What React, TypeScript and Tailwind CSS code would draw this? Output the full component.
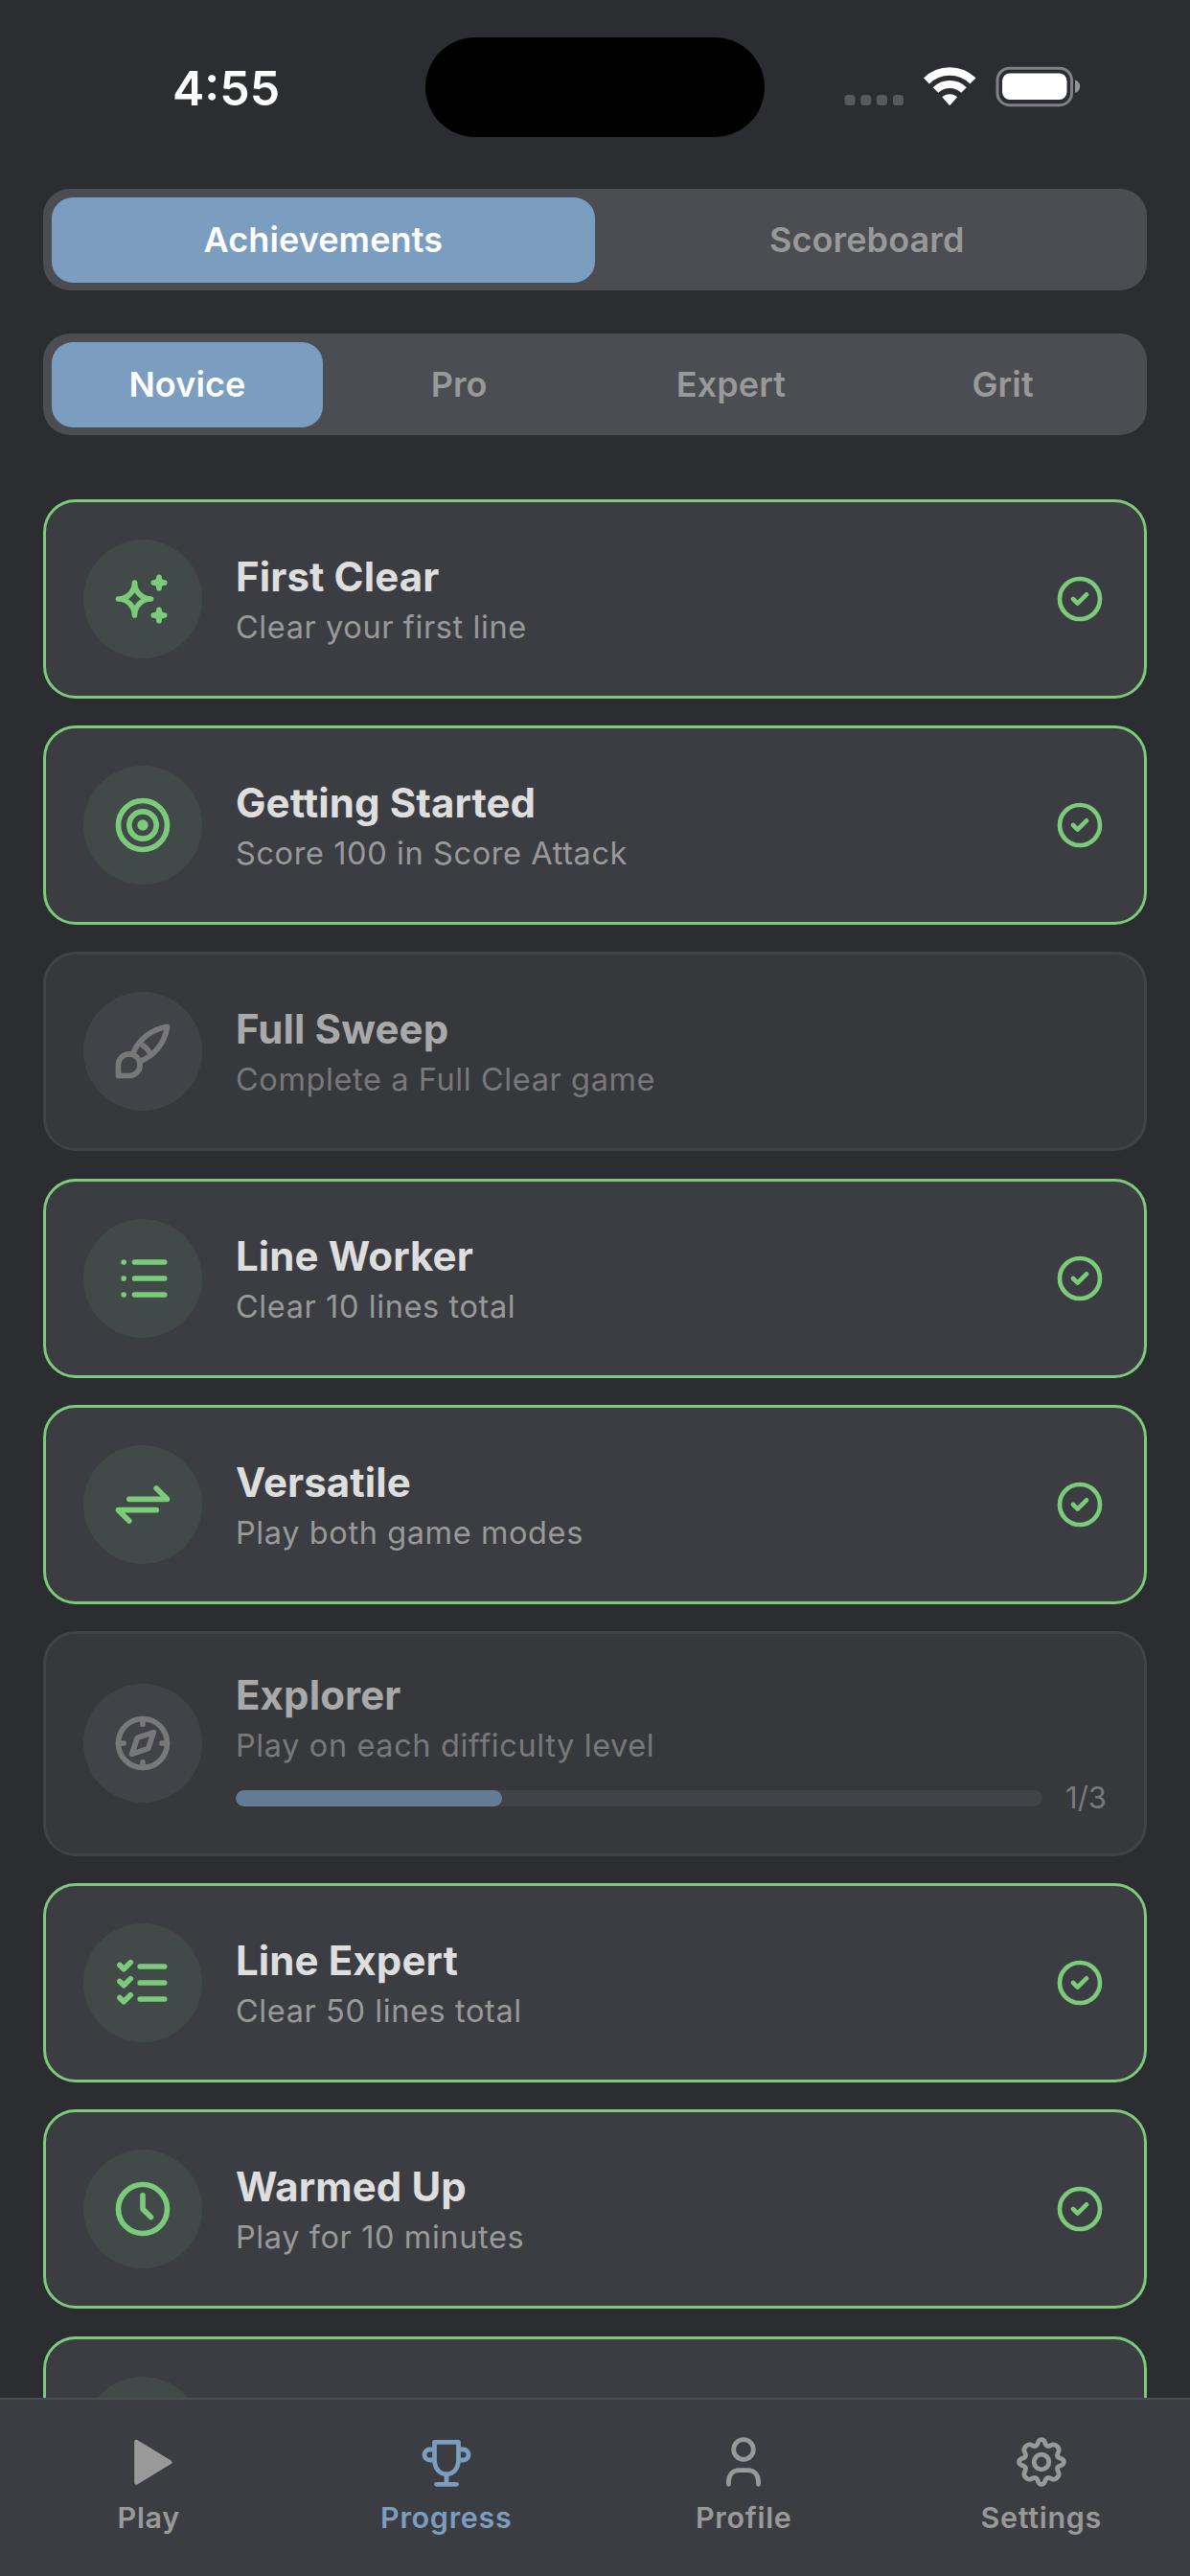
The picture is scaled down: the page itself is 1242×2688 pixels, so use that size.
import type { IconType } from 'react-icons';
import {
  TbSparkles,
  TbTarget,
  TbBrush,
  TbList,
  TbArrowsExchange,
  TbCompass,
  TbListCheck,
  TbClock,
  TbCircleCheck,
  TbFlame,
} from 'react-icons/tb';

type Achievement = {
  title: string;
  description: string;
  icon: IconType;
  unlocked: boolean;
  progress?: { current: number; total: number };
};

const achievements: Achievement[] = [
  { title: 'First Clear', description: 'Clear your first line', icon: TbSparkles, unlocked: true },
  { title: 'Getting Started', description: 'Score 100 in Score Attack', icon: TbTarget, unlocked: true },
  { title: 'Full Sweep', description: 'Complete a Full Clear game', icon: TbBrush, unlocked: false },
  { title: 'Line Worker', description: 'Clear 10 lines total', icon: TbList, unlocked: true },
  { title: 'Versatile', description: 'Play both game modes', icon: TbArrowsExchange, unlocked: true },
  {
    title: 'Explorer',
    description: 'Play on each difficulty level',
    icon: TbCompass,
    unlocked: false,
    progress: { current: 1, total: 3 },
  },
  { title: 'Line Expert', description: 'Clear 50 lines total', icon: TbListCheck, unlocked: true },
  { title: 'Warmed Up', description: 'Play for 10 minutes', icon: TbClock, unlocked: true },
];

function PlayIcon() {
  return (
    <svg className="size-[56px]" viewBox="0 0 56 56" fill="currentColor" stroke="currentColor" strokeWidth="4" strokeLinejoin="round">
      <path d="M15.200 6.800v43l35.300-21.500z" />
    </svg>
  );
}

function TrophyIcon() {
  return (
    <svg className="size-[56px]" viewBox="0 0 56 56" fill="none" stroke="currentColor" strokeWidth="4.800">
      <path d="M15.500 7.300h25v18.200c0 9-5 15.200-12.500 15.200s-12.500-6.200-12.500-15.200z" strokeLinejoin="round" />
      <path d="M13.500 15h-3a5.500 5.500 0 0 0 0 11h3" />
      <path d="M42.500 15h3a5.500 5.500 0 0 1 0 11h-3" />
      <path d="M28 41v10" />
      <path d="M17.500 51.300h21" strokeLinecap="round" />
    </svg>
  );
}

function UserIcon() {
  return (
    <svg className="size-[56px]" viewBox="0 0 56 56" fill="none" stroke="currentColor" strokeWidth="4.800" strokeLinecap="round">
      <circle cx="28" cy="15" r="10.300" />
      <path d="M12.500 51.300v-3c0-7 4.500-11.600 11-11.600h9c6.500 0 11 4.600 11 11.600v3" />
    </svg>
  );
}

function SettingsIcon() {
  return (
    <svg className="size-[56px]" viewBox="0 0 56 56" fill="none" stroke="currentColor" strokeWidth="4.800" strokeLinejoin="round">
      <circle cx="28" cy="28" r="7.800" />
      <path d="M24.800 6.900C26 3.900 30 3.900 31.200 6.900L32.200 9.400C32.900 11.200 34.900 12 36.600 11.200L39.100 10.100C42.800 8.800 47.200 13.200 45.900 16.900L44.800 19.400C44 21.100 44.800 23.100 46.600 23.800L49.100 24.800C52.100 26 52.100 30 49.100 31.200L46.600 32.200C44.800 32.900 44 34.900 44.800 36.600L45.900 39.100C47.200 42.800 42.800 47.200 39.100 45.900L36.600 44.800C34.900 44 32.900 44.800 32.200 46.600L31.200 49.100C30 52.100 26 52.100 24.800 49.100L23.800 46.600C23.100 44.800 21.100 44 19.400 44.800L16.900 45.900C13.200 47.200 8.800 42.800 10.100 39.100L11.200 36.600C12 34.900 11.200 32.900 9.400 32.200L6.900 31.200C3.900 30 3.900 26 6.900 24.800L9.400 23.800C11.200 23.100 12 21.100 11.200 19.400L10.100 16.900C8.800 13.200 13.200 8.800 16.900 10.100L19.400 11.200C21.100 12 23.100 11.200 23.800 9.400Z" />
    </svg>
  );
}

const tabs = [
  { name: 'Play', icon: PlayIcon, active: false },
  { name: 'Progress', icon: TrophyIcon, active: true },
  { name: 'Profile', icon: UserIcon, active: false },
  { name: 'Settings', icon: SettingsIcon, active: false },
];

function StatusBar() {
  return (
    <div className="relative h-[197px] shrink-0">
      <span className="absolute left-[180px] top-[62px] text-[50px] leading-[60px] font-semibold text-white">
        4:55
      </span>
      <div className="absolute left-[444px] top-[39px] h-[104px] w-[354px] rounded-full bg-black" />
      <svg className="absolute left-[860px] top-[50px]" width="300" height="90" viewBox="0 0 300 90" fill="none">
        <g fill="#58595c">
          <rect x="21.5" y="49" width="11" height="11" rx="3.5" />
          <rect x="38.3" y="49" width="11" height="11" rx="3.5" />
          <rect x="55" y="49" width="11" height="11" rx="3.5" />
          <rect x="72" y="49" width="11" height="11" rx="3.5" />
        </g>
        <path d="M107 34.5a34.5 34.5 0 0 1 48.400 0" stroke="#fff" strokeWidth="8.500" />
        <path d="M116.500 44a21 21 0 0 1 29.500 0" stroke="#fff" strokeWidth="8" />
        <path d="M123.300 51.300a11.500 11.500 0 0 1 15.800 0l-7 7.900a1.200 1.200 0 0 1 -1.800 0z" fill="#fff" />
        <rect x="181" y="21.200" width="77.500" height="38.500" rx="12.500" stroke="#808184" strokeWidth="3" />
        <rect x="186" y="26.500" width="67.500" height="27.500" rx="8" fill="#fff" />
        <path d="M262 33.500c7 2 7 11.500 0 13.500z" fill="#939496" />
      </svg>
    </div>
  );
}

function SegmentedControl({ options, selected }: { options: string[]; selected: string }) {
  return (
    <div className="mx-[45px] flex h-[106px] shrink-0 rounded-[28px] bg-[#4c4d52] p-[8.500px]">
      {options.map((option) => (
        <div
          key={option}
          className={`flex flex-1 items-center justify-center rounded-[22px] text-[36px] font-semibold tracking-[0.1px] ${
            option === selected ? 'bg-[#7b9dbf] text-white' : 'text-[#999999]'
          }`}
        >
          {option}
        </div>
      ))}
    </div>
  );
}

function AchievementCard({ item }: { item: Achievement }) {
  const Icon = item.icon;

  return (
    <div
      className={`flex shrink-0 items-center rounded-[34px] border-[3px] bg-[#3c3d42] px-[39px] ${
        item.progress ? 'h-[235px]' : 'h-[208px]'
      } ${item.unlocked ? 'border-[#7bcb7b]' : 'border-[#4c4d52] opacity-70'}`}
    >
      <div
        className={`flex size-[124px] shrink-0 items-center justify-center rounded-full ${
          item.unlocked ? 'bg-[#414a48] text-[#7bcb7b]' : 'bg-[#4c4d52] text-[#999999]'
        }`}
      >
        <Icon className="size-[68px]" />
      </div>
      <div className={`ml-[35px] flex-1 ${item.progress ? '' : 'pt-[7px]'}`}>
        <h3 className="text-[42px] leading-[52px] font-bold tracking-[0.1px] text-[#dedede]">{item.title}</h3>
        <p className="text-[32.500px] leading-[53px] tracking-[0.6px] text-[#999999]">{item.description}</p>
        {item.progress && (
          <div className="mt-[9px] flex h-[38px] items-center">
            <div className="h-[17px] flex-1 overflow-hidden rounded-full bg-[#4c4d52]">
              <div
                className="h-full rounded-full bg-[#7b9dbf]"
                style={{ width: `${Math.round((item.progress.current / item.progress.total) * 100)}%` }}
              />
            </div>
            <span className="w-[67px] text-right text-[31px] text-[#999999]">
              {item.progress.current}/{item.progress.total}
            </span>
          </div>
        )}
      </div>
      {item.unlocked && <TbCircleCheck className="size-[56px] text-[#7bcb7b]" />}
    </div>
  );
}

function TabBar() {
  return (
    <nav className="flex h-[186px] shrink-0 border-t-2 border-[#4c4d52] bg-[#3c3d42] pt-[37px]">
      {tabs.map((tab) => (
        <div
          key={tab.name}
          className={`flex flex-1 flex-col items-center ${tab.active ? 'text-[#7b9dbf]' : 'text-[#999999]'}`}
        >
          <tab.icon />
          <span className="mt-[11px] text-[30.500px] leading-[38px] font-semibold tracking-[0.7px]">{tab.name}</span>
        </div>
      ))}
    </nav>
  );
}

export default function App() {
  return (
    <div className="flex h-[2688px] w-[1242px] flex-col overflow-hidden bg-[#2c2d31] font-['Inter','Liberation_Sans',sans-serif]">
      <StatusBar />
      <SegmentedControl options={['Achievements', 'Scoreboard']} selected="Achievements" />
      <div className="h-[45px] shrink-0" />
      <SegmentedControl options={['Novice', 'Pro', 'Expert', 'Grit']} selected="Novice" />

      <main className="flex min-h-0 flex-1 flex-col gap-[28.200px] overflow-hidden px-[45px] pt-[67px]">
        {achievements.map((item) => (
          <AchievementCard key={item.title} item={item} />
        ))}
        {/* next card, cut off by the tab bar */}
        <AchievementCard item={{ title: '', description: '', icon: TbFlame, unlocked: true }} />
      </main>

      <TabBar />
    </div>
  );
}
